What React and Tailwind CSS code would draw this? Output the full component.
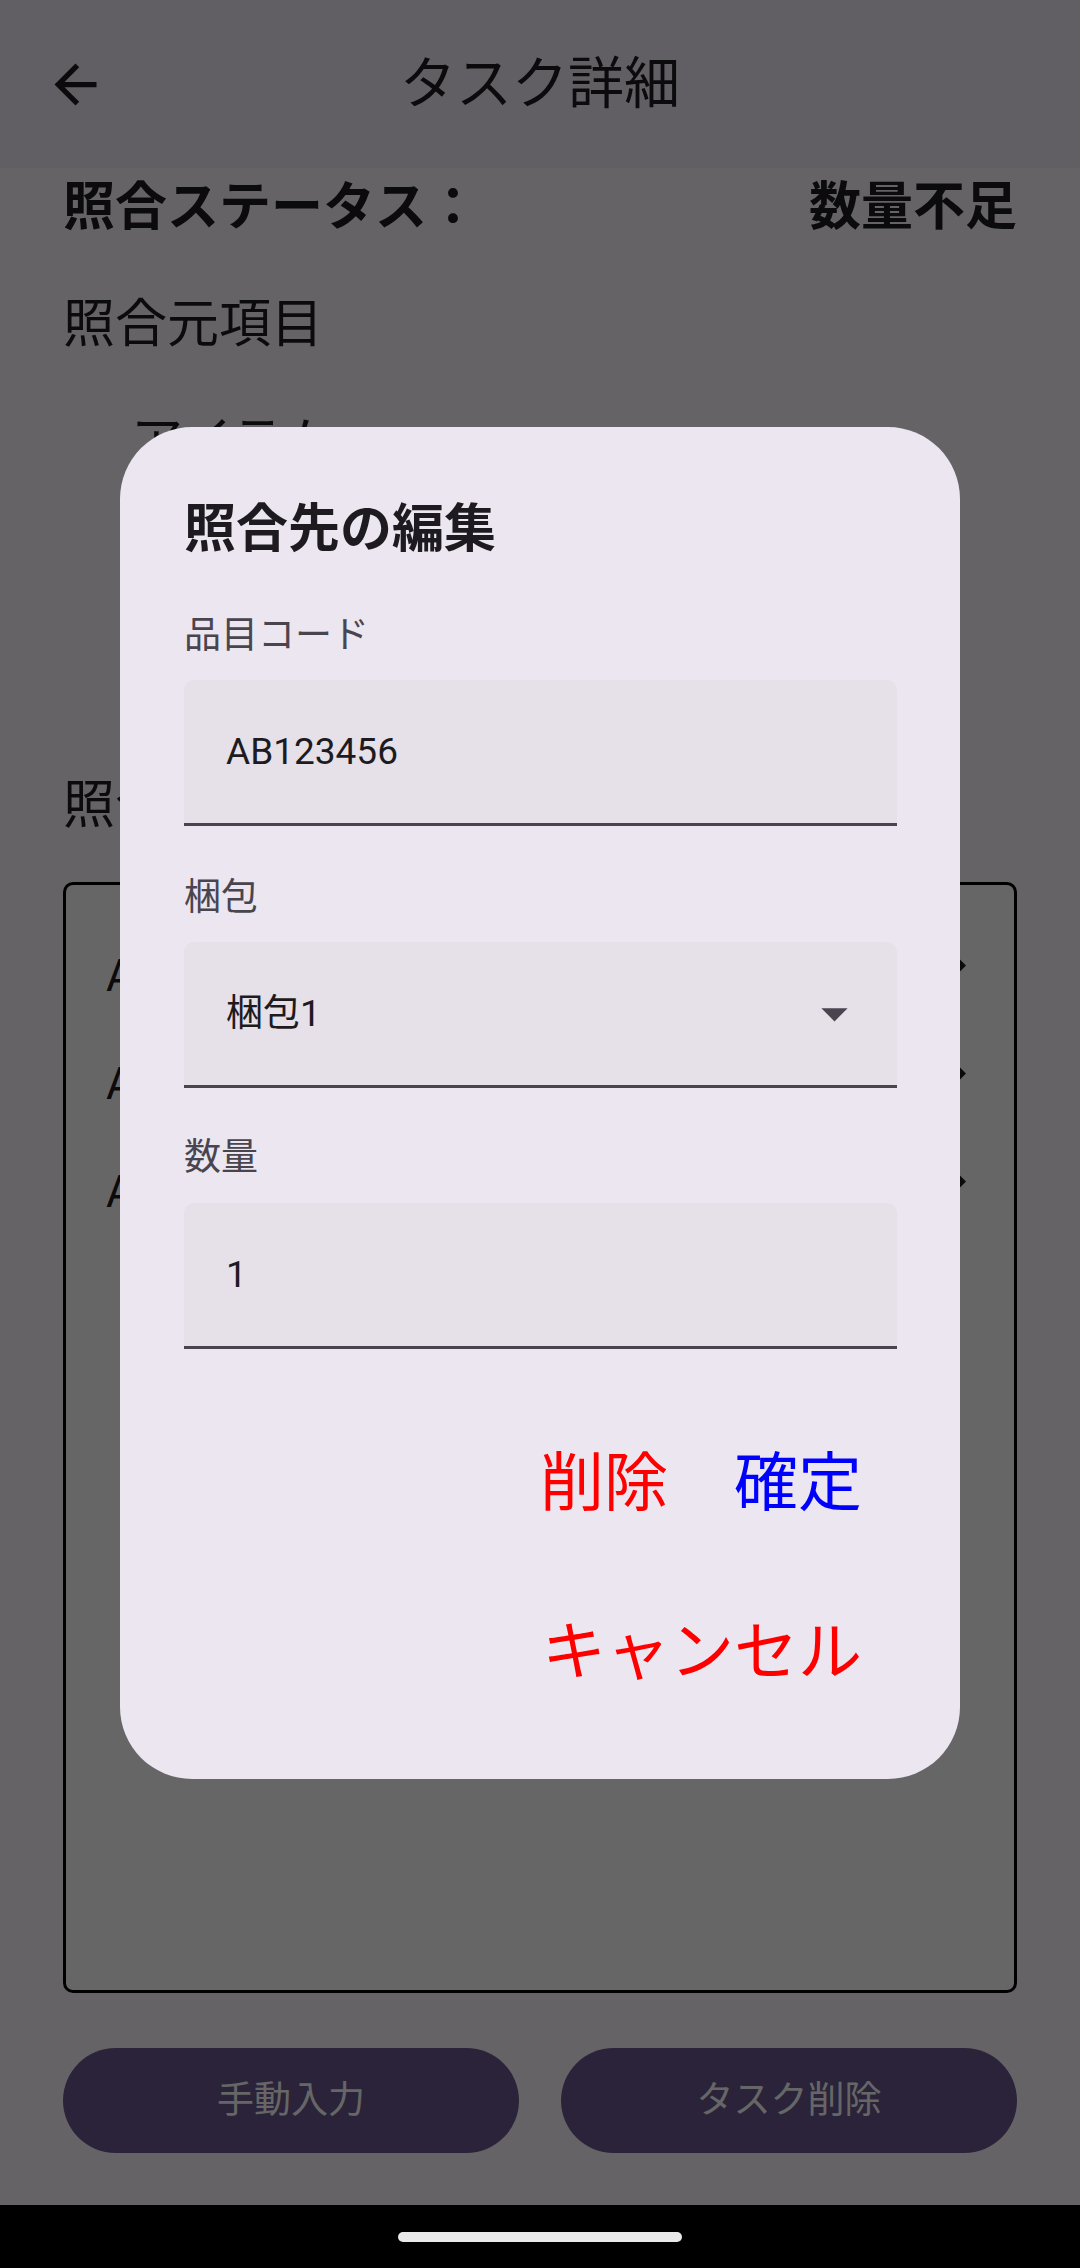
import React from "react";

const rows = ["AB123456", "AB123457", "AB123458"];

function Field({ label, value, dropdown, first }) {
  return (
    <>
      <div className={`${first ? "mt-[46px]" : "mt-[47px]"} flex h-[50px] items-center text-[37px] leading-none text-[#49454F]`}>
        {label}
      </div>
      <div className="mt-[19px] flex h-[146px] items-center justify-between rounded-t-[10px] border-b-[3px] border-[#49454F] bg-[#E6E0E9] pl-[42px] text-[37px] leading-none text-[#1D1B20]">
        <span>{value}</span>
        {dropdown && (
          <svg viewBox="0 0 24 24" className="mr-[31px] h-[63px] w-[63px] fill-[#49454F]">
            <path d="M7 10l5 5 5-5z" />
          </svg>
        )}
      </div>
    </>
  );
}

export default function App() {
  return (
    <div className="flex h-[2268px] w-[1080px] flex-col overflow-hidden bg-black font-['Roboto','Noto_Sans_CJK_JP',sans-serif]">
      {/* 画面本体 */}
      <div className="relative flex flex-1 flex-col bg-[#FEF7FF] text-[#1D1B20]">
        <header className="flex h-[168px] shrink-0 items-center bg-[#F3EDF7] px-[44px]">
          <svg viewBox="0 0 24 24" className="h-[63px] w-[63px] fill-[#1D1B20]">
            <path d="M20 11H7.83l5.59-5.59L12 4l-8 8 8 8 1.41-1.41L7.83 13H20v-2z" />
          </svg>
          <h1 className="flex-1 text-center text-[56px] leading-none">タスク詳細</h1>
          <div className="w-[63px]" />
        </header>

        <div className="flex flex-col px-[63px]">
          <div className="flex h-[80px] items-center justify-between text-[52px] font-bold leading-none">
            <span>照合ステータス：</span>
            <span>数量不足</span>
          </div>
          <div className="mt-[37px] flex h-[80px] items-center text-[52px] leading-none">照合元項目</div>
          <div className="mt-[38px] flex h-[80px] items-center pl-[68px] text-[52px] leading-none">アイテム</div>
          {/* ダイアログの裏に隠れる部分 */}
          <div className="h-[240px]" />
          <div className="mt-[43px] flex h-[80px] items-center text-[52px] leading-none">照合先項目</div>

          <div className="mt-[36px] flex h-[1111px] flex-col rounded-[10px] border-[3px] border-black bg-white pl-[40px] pr-[27px] pt-[37px]">
            {rows.map((r) => (
              <div key={r} className="flex h-[108px] items-center justify-between text-[44px] leading-none">
                <span>{r}</span>
                <svg viewBox="0 0 24 24" className="mb-[22px] h-[63px] w-[63px] fill-[#1D1B20]">
                  <path d="M8.59 16.59L13.17 12 8.59 7.41 10 6l6 6-6 6-1.41-1.41z" />
                </svg>
              </div>
            ))}
          </div>

          <div className="mt-[55px] flex gap-[42px]">
            <button className="flex h-[105px] flex-1 items-center justify-center rounded-full bg-[#69578F] text-[37px] leading-none text-white">
              手動入力
            </button>
            <button className="flex h-[105px] flex-1 items-center justify-center rounded-full bg-[#69578F] text-[37px] leading-none text-white">
              タスク削除
            </button>
          </div>
        </div>

        {/* ダイアログ */}
        <div className="absolute inset-0 flex items-center justify-center bg-black/60">
          <div className="flex w-[840px] flex-col rounded-[72px] bg-[#ECE6F0] pb-[76px] pl-[64px] pr-[63px] pt-[68px]">
            <h2 className="flex h-[70px] items-center text-[52px] font-bold leading-none text-[#1D1B20]">照合先の編集</h2>
            <Field first label="品目コード" value="AB123456" />
            <Field label="梱包" value="梱包1" dropdown />
            <div className="mt-[45px] flex h-[50px] items-center text-[37px] leading-none text-[#49454F]">数量</div>
            <div className="mt-[20px] flex h-[146px] items-center rounded-t-[10px] border-b-[3px] border-[#49454F] bg-[#E6E0E9] pl-[42px] text-[37px] leading-none text-[#1D1B20]">
              1
            </div>
            <div className="mt-[85px] flex h-[100px] items-center justify-end gap-[66px] pr-[35px] text-[64px] leading-none">
              <button className="text-[#FF0000]">削除</button>
              <button className="text-[#0000FF]">確定</button>
            </div>
            <div className="mt-[69px] flex h-[100px] items-center justify-end pr-[35px] text-[64px] leading-none">
              <button className="text-[#FF0000]">キャンセル</button>
            </div>
          </div>
        </div>
      </div>

      {/* ナビゲーションバー */}
      <div className="flex h-[63px] shrink-0 items-center justify-center bg-black">
        <div className="h-[10px] w-[284px] rounded-full bg-[#EAEAEA]" />
      </div>
    </div>
  );
}
